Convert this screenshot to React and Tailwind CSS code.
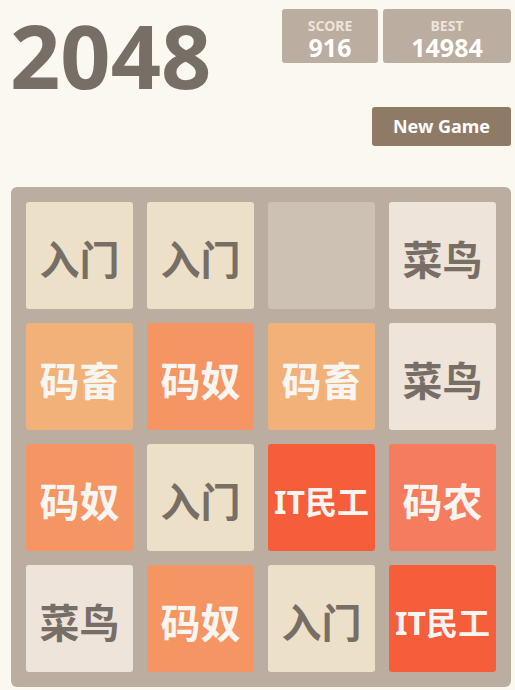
import React from 'react';

const TILES = {
  2: { label: '菜鸟', cls: 'bg-[#eee4da] text-[#776e65] text-[40px]' },
  4: { label: '入门', cls: 'bg-[#ede0c8] text-[#776e65] text-[40px]' },
  8: { label: '码畜', cls: 'bg-[#f2b179] text-[#f9f6f2] text-[40px]' },
  16: { label: '码奴', cls: 'bg-[#f59563] text-[#f9f6f2] text-[40px]' },
  32: { label: '码农', cls: 'bg-[#f67c5f] text-[#f9f6f2] text-[40px]' },
  64: { label: 'IT民工', cls: 'bg-[#f65e3b] text-[#f9f6f2] text-[32px]' },
};

const grid = [
  [4, 4, 0, 2],
  [8, 16, 8, 2],
  [16, 4, 64, 32],
  [2, 16, 4, 64],
];

const ScoreBox = ({ title, value, width }) => (
  <div className={`${width} h-[54px] bg-[#bbada0] rounded-[3px] flex flex-col items-center pt-[9px]`}>
    <span className="text-[14px] leading-[16px] font-bold text-[#eee4da]">{title}</span>
    <span className="text-[25px] leading-[26px] font-bold text-white">{value}</span>
  </div>
);

const Tile = ({ value }) => {
  if (!value) return <div className="w-[107px] h-[107px] rounded-[3px] bg-[#cdc1b4]" />;
  const t = TILES[value];
  return (
    <div className={`w-[107px] h-[107px] rounded-[3px] flex items-center justify-center pt-[8px] font-bold ${t.cls}`}>
      {t.label}
    </div>
  );
};

export default function App() {
  return (
    <div
      className="min-h-[690px] bg-[#faf8ef] pl-[11px] pt-[9px]"
      style={{ fontFamily: '"Noto Sans", "Noto Sans CJK SC", sans-serif' }}
    >
      <div className="w-[500px]">
        <div className="flex justify-between">
          <h1 className="text-[88px] leading-[120px] h-[100px] font-bold text-[#776e65] ml-[-1px] mt-[-14px]">2048</h1>
          <div className="flex flex-col items-end">
            <div className="flex gap-[5px]">
              <ScoreBox title="SCORE" value="916" width="w-[96px]" />
              <ScoreBox title="BEST" value="14984" width="w-[128px]" />
            </div>
            <button className="mt-[44px] w-[139px] h-[39px] rounded-[3px] bg-[#8f7a66] text-white text-[18px] font-bold">
              New Game
            </button>
          </div>
        </div>

        <div className="mt-[41px] bg-[#bbada0] rounded-[6px] p-[15px] grid grid-cols-4 gap-[14px]">
          {grid.flat().map((v, i) => (
            <Tile key={i} value={v} />
          ))}
        </div>
      </div>
    </div>
  );
}
